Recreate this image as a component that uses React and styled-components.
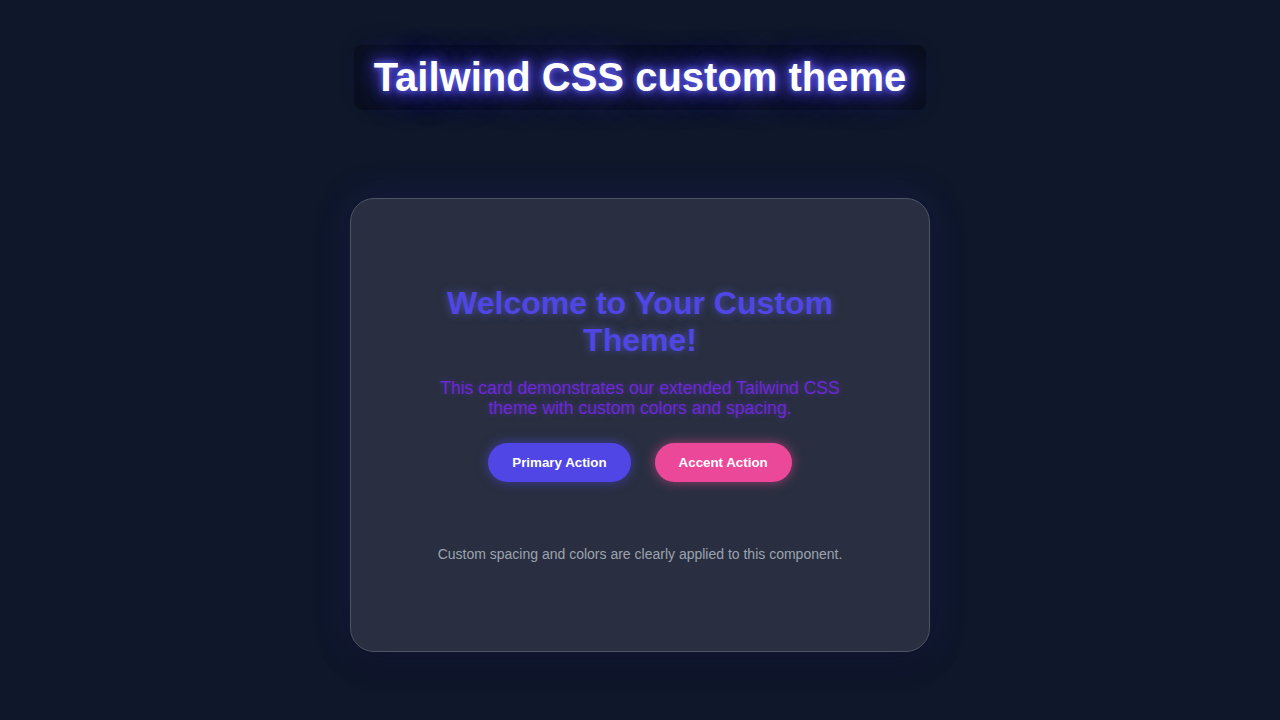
import React from 'react'
import styled, { createGlobalStyle } from 'styled-components'

const GlobalStyle = createGlobalStyle`
  html, body {
    margin: 0;
    padding: 0;
    background: #0f172a;
    font-family: "Liberation Sans", Arial, sans-serif;
  }
`

const Page = styled.div`
  min-height: 720px;
  box-sizing: border-box;
  padding-top: 45px;
  display: flex;
  flex-direction: column;
  align-items: center;
`

const PageTitle = styled.h1`
  margin: 0;
  padding: 10px 20px;
  font-size: 40px;
  line-height: 45px;
  font-weight: 700;
  color: #ffffff;
  background: rgba(0, 0, 0, 0.3);
  border-radius: 8px;
  text-shadow: 0 0 6px #6366f1, 0 0 14px #4f46e5, 0 0 26px #4338ca, 0 0 36px #3730a3;
`

const Card = styled.div`
  margin-top: 88px;
  width: 580px;
  box-sizing: border-box;
  padding: 86px 66px 89px;
  background: #292f40;
  border: 1px solid #4b5563;
  border-radius: 24px;
  box-shadow: 0 0 40px rgba(79, 70, 229, 0.16), 0 10px 30px rgba(0, 0, 0, 0.3);
  display: flex;
  flex-direction: column;
  align-items: center;
  text-align: center;
`

const Heading = styled.h2`
  margin: 0 0 19px;
  font-size: 32px;
  line-height: 1.15;
  font-weight: 700;
  color: #4f46e5;
  text-shadow: 0 0 8px rgba(99, 102, 241, 0.6);
`

const Lead = styled.p`
  margin: 0;
  font-size: 17.6px;
  line-height: 1.15;
  color: #6d28d9;
  text-shadow: 0 0 6px rgba(124, 58, 237, 0.45);
`

const Actions = styled.div`
  margin-top: 25px;
  display: flex;
  gap: 24px;
`

const Button = styled.button`
  border: none;
  border-radius: 9999px;
  padding: 12px 24px;
  font-family: "Liberation Sans", Arial, sans-serif;
  font-size: 13.333px;
  font-weight: 700;
  color: #ffffff;
  cursor: pointer;
  background: ${p => (p.$accent ? '#ec4899' : '#4f46e5')};
  box-shadow: 0 0 12px ${p => (p.$accent ? 'rgba(236, 72, 153, 0.6)' : 'rgba(79, 70, 229, 0.6)')};
`

const Note = styled.p`
  margin: 64px 0 0;
  font-size: 14px;
  line-height: 16px;
  color: #9ca3af;
`

const App = () => {
  return (
    <>
      <GlobalStyle />
      <Page>
        <PageTitle>Tailwind CSS custom theme</PageTitle>
        <Card>
          <Heading>Welcome to Your Custom Theme!</Heading>
          <Lead>
            This card demonstrates our extended Tailwind CSS theme with custom colors and spacing.
          </Lead>
          <Actions>
            <Button>Primary Action</Button>
            <Button $accent>Accent Action</Button>
          </Actions>
          <Note>Custom spacing and colors are clearly applied to this component.</Note>
        </Card>
      </Page>
    </>
  )
}

export default App
